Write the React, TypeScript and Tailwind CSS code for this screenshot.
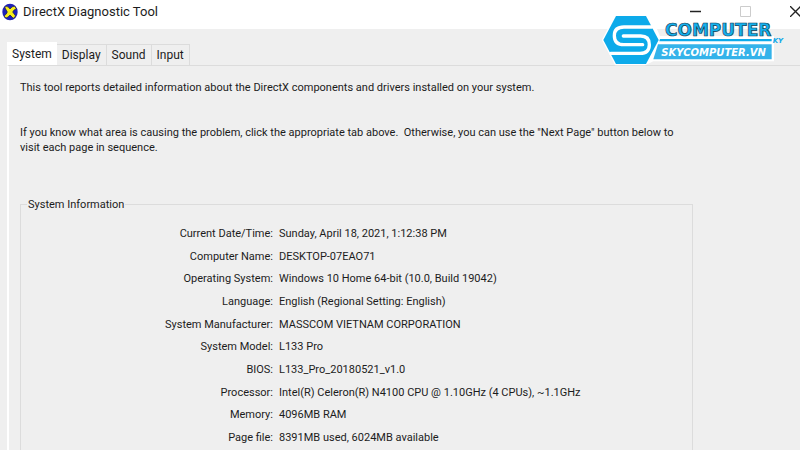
const info = [
  ["Current Date/Time:", "Sunday, April 18, 2021, 1:12:38 PM"],
  ["Computer Name:", "DESKTOP-07EAO71"],
  ["Operating System:", "Windows 10 Home 64-bit (10.0, Build 19042)"],
  ["Language:", "English (Regional Setting: English)"],
  ["System Manufacturer:", "MASSCOM VIETNAM CORPORATION"],
  ["System Model:", "L133 Pro"],
  ["BIOS:", "L133_Pro_20180521_v1.0"],
  ["Processor:", "Intel(R) Celeron(R) N4100 CPU @ 1.10GHz (4 CPUs), ~1.1GHz"],
  ["Memory:", "4096MB RAM"],
  ["Page file:", "8391MB used, 6024MB available"],
];

const tabs = ["System", "Display", "Sound", "Input"];

function DxIcon() {
  return (
    <svg viewBox="0 0 48 54" className="h-[18px] w-4" aria-hidden="true">
      <ellipse cx="24" cy="27" rx="23" ry="25" fill="#1f22b8" />
      <path d="M8 13 Q14 7 20 13 L24 18 Q30 9 38 10 L43 17 Q35 20 32 27 L41 39 L34 46 L24 36 Q18 44 12 45 L6 39 Q14 34 16 27 Z" fill="#f7ee1c" stroke="#15154a" strokeWidth="2" />
    </svg>
  );
}

function Logo() {
  return (
    <svg viewBox="30 42 570 156" className="absolute top-[14px] right-[10px] h-[52px] w-[190px]" role="img" aria-label="SKY Computer">
      <path d="M78 48 H180 L207 112 H548 V180 H188 L165 192 H78 L40 120 Z" fill="#fff" stroke="#fff" strokeWidth="8" />
      <path d="M78 48 H168 L206 120 L168 192 H78 L40 120 Z" fill="#0daaea" />
      <path d="M186 81 H102 Q73 81 73 107 Q73 134 102 134 H158" fill="none" stroke="#fff" strokeWidth="10" strokeLinecap="round" />
      <path d="M100 108 H152 Q178 108 178 134 Q178 160 150 160 H62" fill="none" stroke="#fff" strokeWidth="10" strokeLinecap="round" />
      <path d="M210 117 H545 V124 H208 Z" fill="#0daaea" />
      <path d="M204 133 H545 V178 H190 Z" fill="#34b3ea" />
      <text x="225" y="107" fontSize="51" fontWeight="900" fill="#14b0ee" stroke="#123a52" strokeWidth="2" className="font-['DejaVu_Sans',sans-serif]">COMPUTER</text>
      <text x="548" y="129" fontSize="21" fontWeight="700" fontStyle="italic" fill="#14a9e8" className="font-['DejaVu_Sans',sans-serif]">KY</text>
      <text x="214" y="167" fontSize="30" fontWeight="700" fontStyle="italic" fill="#fff" className="font-['DejaVu_Sans',sans-serif]">SKYCOMPUTER.VN</text>
    </svg>
  );
}

export default function App() {
  return (
    <div className="relative flex h-screen flex-col overflow-hidden bg-[#efefef] font-['Roboto',sans-serif] text-[#1c1c1c]">
      <header className="flex h-[29px] shrink-0 items-start justify-between bg-white pl-[2px]">
        <div className="flex items-center gap-[5px] pt-[2px]">
          <DxIcon />
          <h1 className="text-[13px] leading-5">DirectX Diagnostic Tool</h1>
        </div>
        <div className="flex h-[22px] items-center gap-[39px]">
          <button type="button" aria-label="Minimize">
            <svg viewBox="0 0 11 11" className="size-[11px]"><path d="M0 5.5H11" stroke="#222" strokeWidth="1.5" /></svg>
          </button>
          <button type="button" aria-label="Maximize" disabled>
            <svg viewBox="0 0 11 11" className="size-[11px]"><path d="M.5 .5H10.5V10.5H.5Z" fill="none" stroke="#ccc" /></svg>
          </button>
          <button type="button" aria-label="Close">
            <svg viewBox="0 0 10 11" className="h-[11px] w-[10px]"><path d="M0 0L11 11M11 0L0 11" stroke="#222" strokeWidth="1.3" /></svg>
          </button>
        </div>
      </header>

      <Logo />

      <main className="flex flex-1 flex-col pt-[13px] pl-[7px]">
        <div role="tablist" className="flex items-end text-[12px] leading-5">
          {tabs.map((tab, i) => (
            <button
              key={tab}
              type="button"
              role="tab"
              aria-selected={i === 0}
              className={i === 0 ? "h-[23px] bg-white px-[5px]" : "h-[21px] border-t border-r border-[#dcdcdc] px-[5px]"}
            >
              {tab}
            </button>
          ))}
        </div>

        <div role="tabpanel" className="flex flex-1 flex-col border-t border-l-2 border-t-[#dcdcdc] border-l-white pt-[14px] pr-[107px] pl-[11px] text-[11px] leading-[15px]">
          <p>This tool reports detailed information about the DirectX components and drivers installed on your system.</p>
          <p className="mt-[30px]">
            If you know what area is causing the problem, click the appropriate tab above.&nbsp; Otherwise, you can use the "Next Page" button below to visit each page in sequence.
          </p>
          <fieldset className="mt-[42px] flex-1 border border-b-0 border-[#dcdcdc] pl-[6px]">
            <legend className="px-px">System Information</legend>
            <table className="mt-[10px] h-[227px]">
              <tbody>
                {info.map(([label, value]) => (
                  <tr key={label}>
                    <th scope="row" className="w-[246px] p-0 text-right font-normal">{label}</th>
                    <td className="p-0 pl-[6px]">{value}</td>
                  </tr>
                ))}
              </tbody>
            </table>
          </fieldset>
        </div>
      </main>
    </div>
  );
}
